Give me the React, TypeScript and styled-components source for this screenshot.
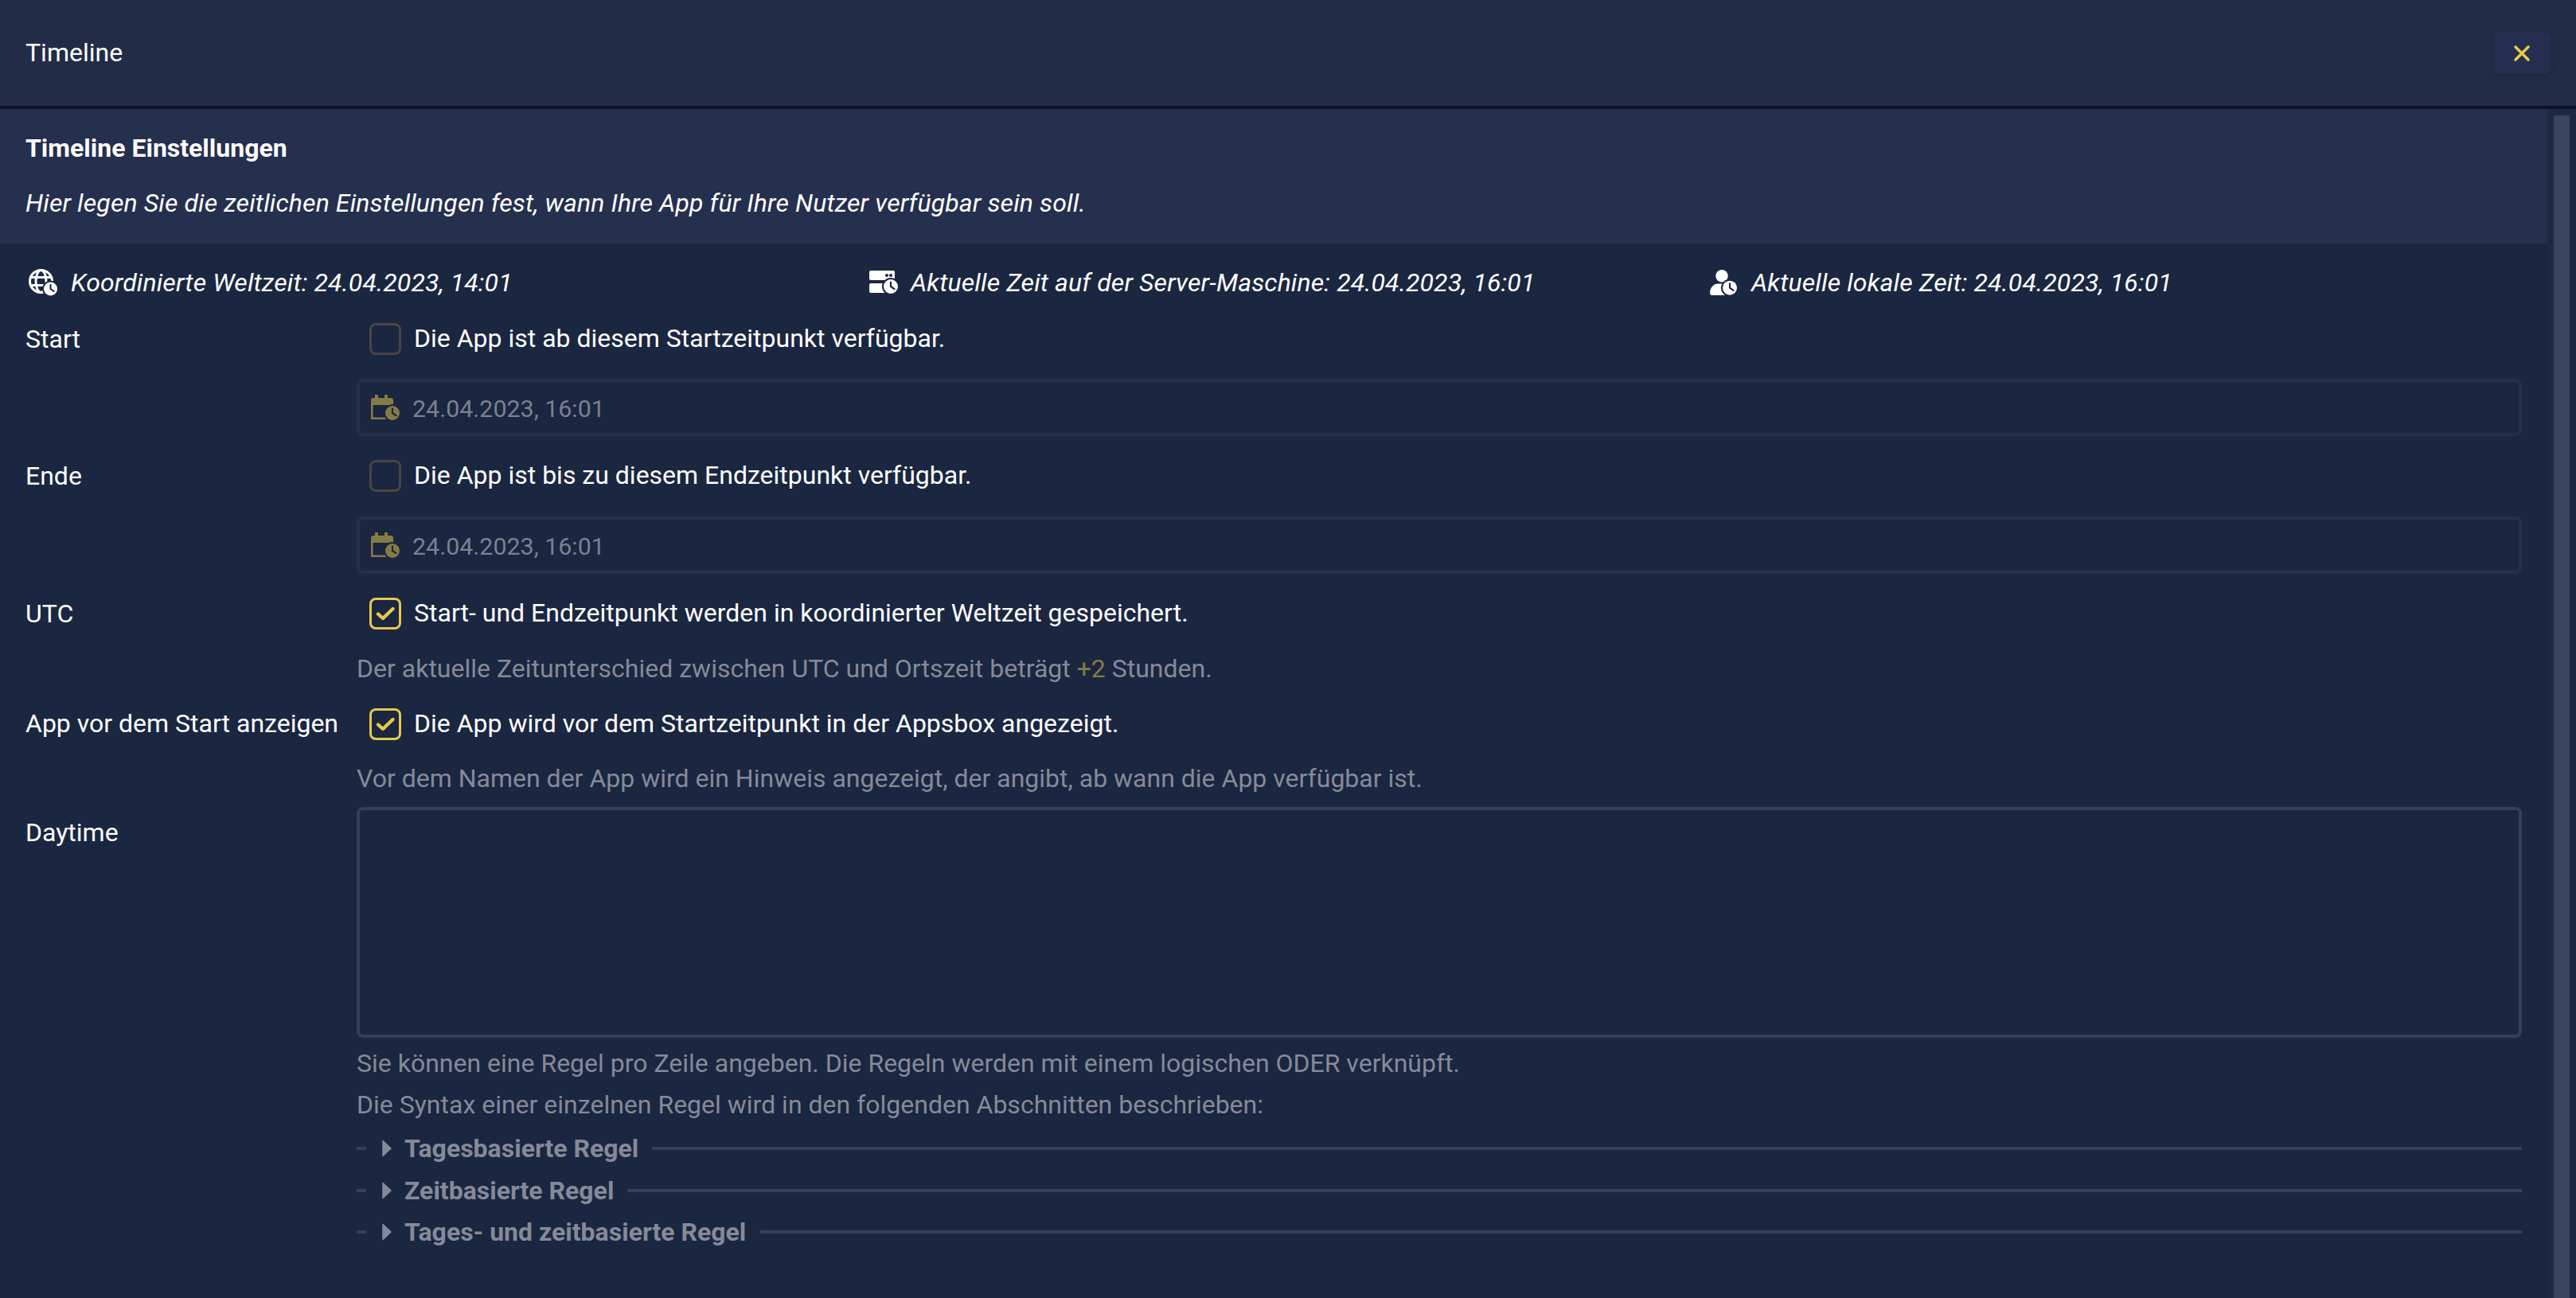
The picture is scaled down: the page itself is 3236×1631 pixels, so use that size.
import React from 'react';
import styled, { createGlobalStyle } from 'styled-components';

const colors = {
  page: '#1b2640',
  header: '#232c47',
  divider: '#0e1226',
  banner: '#252f4e',
  closeBg: '#252e4e',
  yellow: '#e6c84d',
  yellowDim: '#857b45',
  uncheckedBorder: '#4a4544',
  inputBorder: '#252f4b',
  line: '#343f60',
  thumb: '#3a4460',
  track: '#1d2843',
  muted: '#858a98',
  placeholder: '#7b8190',
  white: '#ffffff',
};

const GlobalStyle = createGlobalStyle`
  html, body {
    margin: 0;
    padding: 0;
    background: ${colors.page};
  }
  * {
    box-sizing: border-box;
  }
  body {
    font-family: Roboto, "Liberation Sans", sans-serif;
    font-size: 32px;
    color: ${colors.white};
  }
`;

const Page = styled.div`
  display: flex;
  flex-direction: column;
  width: 3236px;
  height: 1631px;
  overflow: hidden;
  background: ${colors.page};
`;

const Header = styled.header`
  display: flex;
  align-items: center;
  justify-content: space-between;
  flex: none;
  height: 137px;
  padding: 0 32px;
  background: ${colors.header};
  border-bottom: 4px solid ${colors.divider};
`;

const HeaderTitle = styled.div`
  padding-bottom: 2px;
  font-size: 32px;
`;

const CloseButton = styled.button`
  display: flex;
  align-items: center;
  justify-content: center;
  width: 72px;
  height: 53px;
  padding: 0;
  border: 0;
  border-radius: 8px;
  background: ${colors.closeBg};
  box-shadow: 0 4px 8px rgba(20, 26, 48, 0.25);
`;

const Body = styled.div`
  display: flex;
  flex: 1;
  min-height: 0;
`;

const Content = styled.main`
  flex: 1;
  min-width: 0;
`;

const ScrollTrack = styled.div`
  flex: none;
  width: 36px;
  padding: 8px 8px 0;
  background: ${colors.track};
`;

const ScrollThumb = styled.div`
  height: 100%;
  background: ${colors.thumb};
`;

const Banner = styled.section`
  height: 169px;
  padding: 27px 32px 0;
  background: ${colors.banner};
`;

const BannerTitle = styled.div`
  font-weight: 700;
  line-height: 44px;
`;

const BannerText = styled.div`
  margin-top: 25px;
  font-style: italic;
  letter-spacing: 0.12px;
  line-height: 44px;
`;

const TimeRow = styled.div`
  display: grid;
  grid-template-columns: repeat(3, 1056px);
  height: 42px;
  margin: 28px 0 0 32px;
`;

const TimeItem = styled.div`
  display: flex;
  align-items: center;
  gap: 16px;
  padding-left: 4px;
  font-style: italic;
  letter-spacing: 0.12px;
  line-height: 42px;
  white-space: nowrap;
`;

const Form = styled.div`
  display: flex;
  flex-direction: column;
  margin-top: 30px;
  padding: 0 32px;
`;

const Field = styled.div<{ $gap?: number }>`
  display: grid;
  grid-template-columns: 416px 1fr;
  margin-bottom: ${(p) => p.$gap ?? 30}px;
`;

const FieldLabel = styled.label<{ $offset?: number }>`
  margin-top: ${(p) => p.$offset ?? 0}px;
  line-height: 40px;
  white-space: nowrap;
`;

const CheckLine = styled.div`
  display: flex;
  align-items: center;
  gap: 16px;
  height: 40px;
  padding-left: 16px;
`;

const CheckText = styled.span`
  position: relative;
  top: -1px;
`;

const CheckBox = styled.span<{ $checked?: boolean }>`
  display: flex;
  align-items: center;
  justify-content: center;
  width: 40px;
  height: 40px;
  border: 3px solid ${(p) => (p.$checked ? colors.yellow : colors.uncheckedBorder)};
  border-radius: 8px;
`;

const DateInput = styled.div`
  display: flex;
  align-items: center;
  gap: 16px;
  height: 72px;
  padding: 0 14px;
  border: 4px solid ${colors.inputBorder};
  border-radius: 8px;
  color: ${colors.placeholder};
`;

const DateValue = styled.span`
  padding-top: 3px;
  font-size: 30.4px;
`;

const Hint = styled.div`
  color: ${colors.muted};
  line-height: 40px;
`;

const HintAccent = styled.span`
  color: ${colors.yellowDim};
`;

const TextArea = styled.div`
  height: 290px;
  margin-bottom: 6px;
  border: 4px solid ${colors.line};
  border-radius: 8px;
`;

const RuleHint = styled.div`
  color: ${colors.muted};
  line-height: 52px;
`;

const RuleList = styled.div`
  margin-top: 3px;
`;

const RuleRow = styled.div`
  display: flex;
  align-items: center;
  height: 52.5px;
`;

const RuleDash = styled.span`
  flex: none;
  width: 12px;
  height: 4px;
  margin-right: 20px;
  background: ${colors.line};
`;

const RuleTitle = styled.span`
  margin: 0 17px 0 16px;
  color: ${colors.muted};
  font-weight: 700;
  white-space: nowrap;
`;

const RuleLine = styled.span`
  flex: 1;
  height: 4px;
  background: ${colors.line};
`;

const CloseIcon = () => (
  <svg width="24" height="24" viewBox="0 0 24 24" fill="none">
    <path d="M4 4 L20 20 M20 4 L4 20" stroke={colors.yellow} strokeWidth="3.6" strokeLinecap="round" />
  </svg>
);

const CheckIcon = () => (
  <svg width="28" height="28" viewBox="0 0 28 28" fill="none">
    <path d="M5 14.5 L11 20 L23.5 8" stroke={colors.yellow} strokeWidth="4.4" strokeLinecap="round" strokeLinejoin="round" />
  </svg>
);

const ClockBadge = ({ cx, cy, r, fill, bg }: { cx: number; cy: number; r: number; fill: string; bg: string }) => (
  <>
    <circle cx={cx} cy={cy} r={r + 2} fill={bg} />
    <circle cx={cx} cy={cy} r={r} fill={fill} />
    <path
      d={`M${cx} ${cy - r * 0.6} V${cy} L${cx + r * 0.5} ${cy + r * 0.35}`}
      fill="none"
      stroke={bg}
      strokeWidth={r * 0.24}
      strokeLinecap="round"
      strokeLinejoin="round"
    />
  </>
);

const GlobeClockIcon = () => (
  <svg width="37" height="34" viewBox="0 0 37 34" fill="none">
    <circle cx="15.5" cy="15.5" r="14" stroke="#fff" strokeWidth="3" />
    <ellipse cx="15.5" cy="15.5" rx="6.5" ry="14" stroke="#fff" strokeWidth="3" />
    <path d="M2 10.5 H29 M2 20.5 H29" stroke="#fff" strokeWidth="3" />
    <ClockBadge cx={27.5} cy={25} r={8.5} fill="#fff" bg={colors.page} />
  </svg>
);

const ServerClockIcon = () => (
  <svg width="36" height="30" viewBox="0 0 36 30" fill="none">
    <rect x="0" y="0" width="32" height="12" rx="2" fill="#fff" />
    <rect x="0" y="16" width="32" height="12" rx="2" fill="#fff" />
    <circle cx="22" cy="6" r="2" fill={colors.page} />
    <circle cx="27" cy="6" r="2" fill={colors.page} />
    <ClockBadge cx={27} cy={20} r={9} fill="#fff" bg={colors.page} />
  </svg>
);

const UserClockIcon = () => (
  <svg width="36" height="32" viewBox="0 0 36 32" fill="none">
    <circle cx="15" cy="7.7" r="7.7" fill="#fff" />
    <path d="M0 29 C0 22 5 17.5 10 17.5 H20 C25 17.5 28 22 28 32 H2.5 C1 32 0 30.8 0 29 Z" fill="#fff" />
    <ClockBadge cx={25} cy={22.7} r={9} fill="#fff" bg={colors.page} />
  </svg>
);

const CalendarClockIcon = () => (
  <svg width="36" height="32" viewBox="0 0 36 32" fill="none">
    <path
      d="M5 0 H9 V4 H17 V0 H21 V4 H25 A3 3 0 0 1 28 7 V13 H0 V7 A3 3 0 0 1 3 4 H5 Z"
      fill={colors.yellowDim}
    />
    <path d="M1.3 11 V29.7 H22 M26.7 11 V16" stroke={colors.yellowDim} strokeWidth="2.6" />
    <ClockBadge cx={27} cy={23} r={9} fill={colors.yellowDim} bg={colors.page} />
  </svg>
);

const RuleArrow = () => (
  <svg width="12" height="22" viewBox="0 0 12 22">
    <path d="M1 1.5 L11 11 L1 20.5 Z" fill={colors.muted} stroke={colors.muted} strokeWidth="1.5" strokeLinejoin="round" />
  </svg>
);

const rules = ['Tagesbasierte Regel', 'Zeitbasierte Regel', 'Tages- und zeitbasierte Regel'];

export default function App() {
  return (
    <Page>
      <GlobalStyle />
      <Header>
        <HeaderTitle>Timeline</HeaderTitle>
        <CloseButton aria-label="Schließen">
          <CloseIcon />
        </CloseButton>
      </Header>
      <Body>
        <Content>
          <Banner>
            <BannerTitle>Timeline Einstellungen</BannerTitle>
            <BannerText>
              Hier legen Sie die zeitlichen Einstellungen fest, wann Ihre App für Ihre Nutzer verfügbar sein soll.
            </BannerText>
          </Banner>
          <TimeRow>
            <TimeItem>
              <GlobeClockIcon />
              Koordinierte Weltzeit: 24.04.2023, 14:01
            </TimeItem>
            <TimeItem>
              <ServerClockIcon />
              Aktuelle Zeit auf der Server-Maschine: 24.04.2023, 16:01
            </TimeItem>
            <TimeItem>
              <UserClockIcon />
              Aktuelle lokale Zeit: 24.04.2023, 16:01
            </TimeItem>
          </TimeRow>
          <Form>
            <Field>
              <FieldLabel>Start</FieldLabel>
              <CheckLine>
                <CheckBox />
                <CheckText>Die App ist ab diesem Startzeitpunkt verfügbar.</CheckText>
              </CheckLine>
            </Field>
            <Field>
              <span />
              <DateInput>
                <CalendarClockIcon />
                <DateValue>24.04.2023, 16:01</DateValue>
              </DateInput>
            </Field>
            <Field $gap={31}>
              <FieldLabel>Ende</FieldLabel>
              <CheckLine>
                <CheckBox />
                <CheckText>Die App ist bis zu diesem Endzeitpunkt verfügbar.</CheckText>
              </CheckLine>
            </Field>
            <Field>
              <span />
              <DateInput>
                <CalendarClockIcon />
                <DateValue>24.04.2023, 16:01</DateValue>
              </DateInput>
            </Field>
            <Field $gap={29}>
              <FieldLabel>UTC</FieldLabel>
              <CheckLine>
                <CheckBox $checked>
                  <CheckIcon />
                </CheckBox>
                <CheckText>Start- und Endzeitpunkt werden in koordinierter Weltzeit gespeichert.</CheckText>
              </CheckLine>
            </Field>
            <Field>
              <span />
              <Hint>
                Der aktuelle Zeitunterschied zwischen UTC und Ortszeit beträgt <HintAccent>+2</HintAccent> Stunden.
              </Hint>
            </Field>
            <Field $gap={28}>
              <FieldLabel $offset={-1}>App vor dem Start anzeigen</FieldLabel>
              <CheckLine>
                <CheckBox $checked>
                  <CheckIcon />
                </CheckBox>
                <CheckText>Die App wird vor dem Startzeitpunkt in der Appsbox angezeigt.</CheckText>
              </CheckLine>
            </Field>
            <Field $gap={16}>
              <span />
              <Hint>Vor dem Namen der App wird ein Hinweis angezeigt, der angibt, ab wann die App verfügbar ist.</Hint>
            </Field>
            <Field $gap={0}>
              <FieldLabel $offset={12}>Daytime</FieldLabel>
              <div>
                <TextArea />
                <RuleHint>
                  Sie können eine Regel pro Zeile angeben. Die Regeln werden mit einem logischen ODER verknüpft.
                </RuleHint>
                <RuleHint>Die Syntax einer einzelnen Regel wird in den folgenden Abschnitten beschrieben:</RuleHint>
                <RuleList>
                  {rules.map((rule) => (
                    <RuleRow key={rule}>
                      <RuleDash />
                      <RuleArrow />
                      <RuleTitle>{rule}</RuleTitle>
                      <RuleLine />
                    </RuleRow>
                  ))}
                </RuleList>
              </div>
            </Field>
          </Form>
        </Content>
        <ScrollTrack>
          <ScrollThumb />
        </ScrollTrack>
      </Body>
    </Page>
  );
}
